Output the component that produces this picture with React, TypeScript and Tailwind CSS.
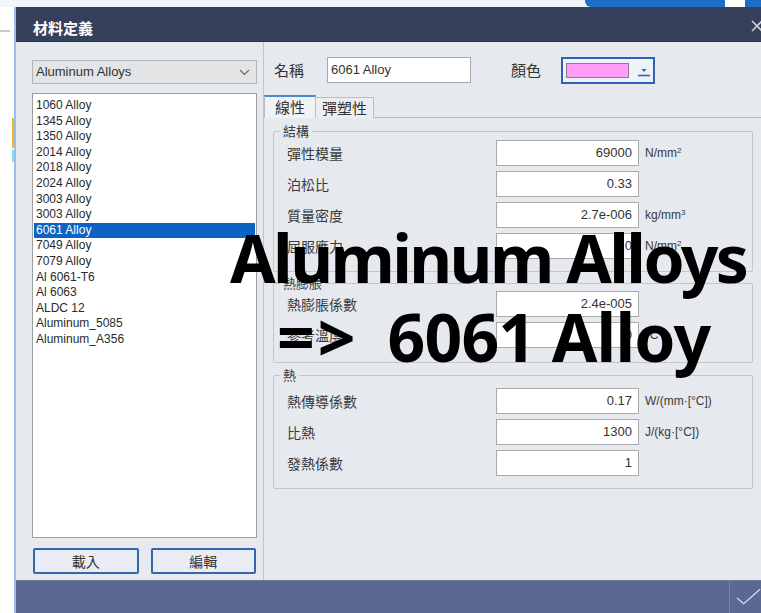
import React from "react";

const cjk = "font-['Microsoft_JhengHei','Noto_Sans_CJK_TC',sans-serif]";
const latin = "font-['Liberation_Sans','Noto_Sans_CJK_TC',sans-serif]";

const alloys = [
  "1060 Alloy",
  "1345 Alloy",
  "1350 Alloy",
  "2014 Alloy",
  "2018 Alloy",
  "2024 Alloy",
  "3003 Alloy",
  "3003 Alloy",
  "6061 Alloy",
  "7049 Alloy",
  "7079 Alloy",
  "Al 6061-T6",
  "Al 6063",
  "ALDC 12",
  "Aluminum_5085",
  "Aluminum_A356",
];

type Row = { label: string; value: string; unit?: React.ReactNode };

function PropRow({ label, value, unit }: Row) {
  return (
    <div className="flex items-center h-[26px]">
      <div className={`w-[222px] pl-[13px] text-[14px] text-[#3a3a3a] ${cjk}`}>{label}</div>
      <div
        className={`w-[143px] h-[26px] bg-white border border-[#a9a9a9] flex items-center justify-end pr-[6px] text-[13px] text-[#333] ${latin}`}
      >
        {value}
      </div>
      <div className={`pl-[6px] text-[12px] text-[#3a3a3a] ${latin}`}>{unit}</div>
    </div>
  );
}

function Group({
  title,
  rows,
  className,
}: {
  title: string;
  rows: Row[];
  className: string;
}) {
  return (
    <fieldset className={`border border-[#c3c7cd] rounded-[2px] ml-[9px] mr-[8px] ${className}`}>
      <legend className={`ml-[6px] px-[3px] text-[13px] leading-[16px] text-[#3a3a3a] ${cjk}`}>
        {title}
      </legend>
      <div className="flex flex-col gap-[5px]">
        {rows.map((r, i) => (
          <PropRow key={i} {...r} />
        ))}
      </div>
    </fieldset>
  );
}

export default function App() {
  return (
    <div className="relative w-[761px] h-[613px] overflow-hidden bg-[#f4f6f9]">
      {/* strip of the desktop behind the dialog */}
      <div className="flex h-[7px]">
        <div className="w-[585px] bg-[#f1f4f8]" />
        <div className="w-[140px] bg-[#1f6fc6] rounded-bl-[6px]" />
        <div className="w-[20px] bg-white" />
        <div className="flex-1 bg-[#1f6fc6]" />
      </div>

      <div className="flex h-[606px]">
        {/* left edge of the window underneath */}
        <div className="w-[14px] flex flex-col bg-white">
          <div className="h-[23px]" />
          <div className="h-[2px] w-[10px] bg-[#c8c8c8]" />
          <div className="h-[86px]" />
          <div className="h-[30px] ml-[12px] bg-[#e8b82a]" />
          <div className="h-[2px]" />
          <div className="h-[12px] ml-[12px] bg-[#7fe3f0]" />
        </div>

        {/* dialog */}
        <div className="flex-1 flex flex-col border-l-2 border-[#9cbde6]">
          <div className="h-[35px] bg-[#363f5b] flex items-end justify-between pl-[17px] pr-[2px] pb-[1px] border-b border-[#2b3349]">
            <span className={`text-white text-[15px] leading-[24px] font-bold ${cjk}`}>材料定義</span>
            <svg width="12" height="12" viewBox="0 0 12 12" className="translate-x-[4px] mb-[8px]">
              <path d="M1 1 L11 11 M11 1 L1 11" stroke="#c9ced8" strokeWidth="1.6" />
            </svg>
          </div>

          <div className="flex-1 flex bg-[#e6e9ee]">
            {/* material list */}
            <div className="w-[248px] flex flex-col pl-[16px] pr-[7px] pt-[18px] border-r border-[#c2c6cc]">
              <div className="h-[24px] w-[225px] flex items-center justify-between bg-[#e3e4e6] border border-[#b4b4b4] pl-[3px] pr-[6px]">
                <span className={`text-[13px] text-[#333] ${latin}`}>Aluminum Alloys</span>
                <svg width="11" height="7" viewBox="0 0 11 7">
                  <path d="M1 1 L5.5 5.5 L10 1" fill="none" stroke="#6b6b6b" strokeWidth="1.2" />
                </svg>
              </div>

              <div className="mt-[9px] h-[445px] w-[225px] bg-white border border-[#9e9e9e] pt-[4px] px-[1px]">
                {alloys.map((a, i) => (
                  <div
                    key={i}
                    className={`h-[15.6px] leading-[15.6px] pl-[2px] text-[12px] ${latin} ${
                      i === 8 ? "bg-[#0b63c5] text-white" : "text-[#2a2a2a]"
                    }`}
                  >
                    {a}
                  </div>
                ))}
              </div>

              <div className="mt-[10px] flex gap-[12px] pl-[1px]">
                {["載入", "編輯"].map((b) => (
                  <div
                    key={b}
                    className={`w-[106px] h-[26px] flex items-center justify-center rounded-[2px] border-2 border-[#3466b0] bg-[#e9edf3] text-[14px] text-[#333] ${cjk}`}
                  >
                    {b}
                  </div>
                ))}
              </div>
            </div>

            {/* properties */}
            <div className="flex-1 flex flex-col pt-[15px]">
              <div className="flex items-center h-[26px]">
                <span className={`ml-[10px] w-[53px] text-[15px] text-[#333] ${cjk}`}>名稱</span>
                <div
                  className={`w-[144px] h-[26px] bg-white border border-[#a9a9a9] flex items-center pl-[3px] text-[13px] text-[#333] ${latin}`}
                >
                  6061 Alloy
                </div>
                <span className={`ml-[40px] w-[50px] text-[15px] text-[#333] ${cjk}`}>顏色</span>
                <div className="w-[94px] h-[27px] flex items-center pl-[3px] border-2 border-[#2e62b4] bg-[#eef1f6]">
                  <div className="w-[63px] h-[15px] bg-[#ff9df7] border border-[#8c7a8f]" />
                  <svg width="14" height="12" viewBox="0 0 14 12" className="ml-[8px] mt-[2px]">
                    <path d="M4.5 4 L9.5 4 L7 7 Z" fill="#2e62b4" />
                    <path d="M1 10.5 L13 10.5" stroke="#2e62b4" strokeWidth="1.6" />
                  </svg>
                </div>
              </div>

              {/* tabs */}
              <div className="mt-[12px] flex items-end h-[23px]">
                <div className={`h-[23px] w-[52px] flex items-center justify-center bg-[#f1f2f4] border border-b-0 border-[#b9bdc3] border-t-2 border-t-[#4f86d0] text-[15px] text-[#333] ${cjk}`}>
                  線性
                </div>
                <div className={`h-[21px] w-[58px] flex items-center justify-center bg-[#eceef1] border border-l-0 border-b-0 border-[#b9bdc3] text-[15px] text-[#333] ${cjk}`}>
                  彈塑性
                </div>
                <div className="flex-1 border-b border-[#b9bdc3]" />
              </div>

              <div className="flex-1 flex flex-col pt-[5px] gap-[3px]">
                <Group
                  title="結構"
                  className="pt-[1px] pb-[12px]"
                  rows={[
                    {
                      label: "彈性模量",
                      value: "69000",
                      unit: (
                        <>
                          N/mm<sup className="text-[8px]">2</sup>
                        </>
                      ),
                    },
                    { label: "泊松比", value: "0.33" },
                    {
                      label: "質量密度",
                      value: "2.7e-006",
                      unit: (
                        <>
                          kg/mm<sup className="text-[8px]">3</sup>
                        </>
                      ),
                    },
                    {
                      label: "屈服應力",
                      value: "0",
                      unit: (
                        <>
                          N/mm<sup className="text-[8px]">2</sup>
                        </>
                      ),
                    },
                  ]}
                />
                <Group
                  title="熱膨脹"
                  className="pt-0 pb-[14px]"
                  rows={[
                    { label: "熱膨脹係數", value: "2.4e-005" },
                    { label: "參考溫度", value: "0", unit: "°C" },
                  ]}
                />
                <Group
                  title="熱"
                  className="mt-[1px] pt-[5px] pb-[12px]"
                  rows={[
                    { label: "熱傳導係數", value: "0.17", unit: "W/(mm·[°C])" },
                    { label: "比熱", value: "1300", unit: "J/(kg·[°C])" },
                    { label: "發熱係數", value: "1" },
                  ]}
                />
              </div>
            </div>
          </div>

          <div className="h-[33px] bg-[#5a6992] border-t border-[#6e7ba0] flex justify-end">
            <div className="w-[32px] border-l border-[#7280a6] flex items-center pl-[6px]">
              <svg width="26" height="18" viewBox="0 0 26 18">
                <path d="M1 10 L8 16 L25 1" fill="none" stroke="#d7dcea" strokeWidth="1.4" />
              </svg>
            </div>
          </div>
        </div>
      </div>

      {/* caption laid over the dialog */}
      <div className="absolute left-[230px] top-[218px] text-black font-bold text-[66px] leading-[79px] font-['Noto_Sans',sans-serif] whitespace-nowrap">
        <div className="tracking-[-2.6px]">Aluminum Alloys</div>
        <div className="pl-[47px] tracking-[-0.8px]">
          <span className="mr-[29px] tracking-[3px]">=&gt;</span>6061 Alloy
        </div>
      </div>
    </div>
  );
}
